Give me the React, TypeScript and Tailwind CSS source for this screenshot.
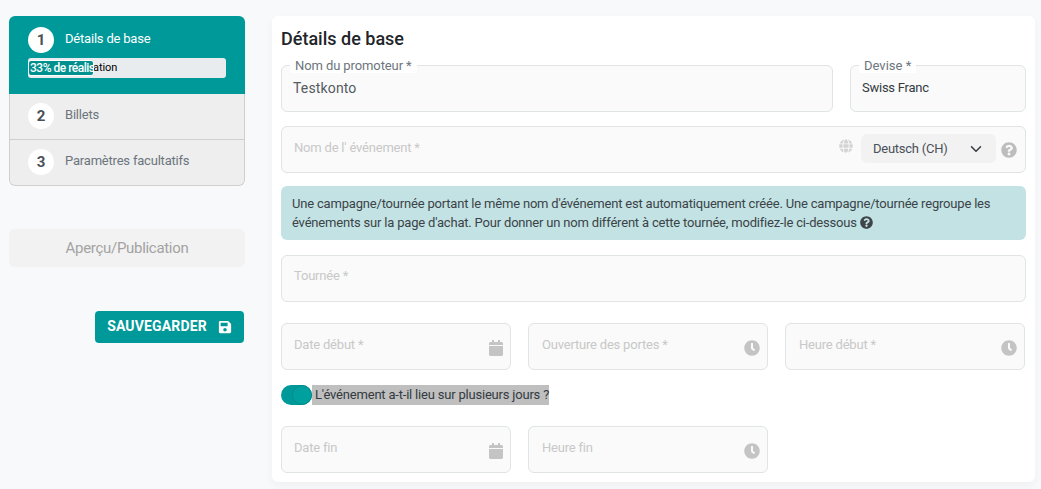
import type { ReactNode } from "react";
import { FaCalendar, FaClock, FaGlobe, FaQuestionCircle, FaSave } from "react-icons/fa";
import { ChevronDown } from "lucide-react";

const fieldBox = "relative bg-[#fafafa] border border-[#e0e4e4] rounded-md px-[12px]";

function Step({ n, label, active }: { n: number; label: string; active?: boolean }) {
  return (
    <div className="flex items-center h-[26px]">
      <div className="w-[26px] h-[26px] rounded-full bg-white flex items-center justify-center text-[15px] font-bold text-[#495057]">
        {n}
      </div>
      <span
        className={
          "ml-[11px] -mt-[3px] text-[13px] tracking-[-0.2px] " +
          (active ? "text-white" : "text-[#6c757d]")
        }
      >
        {label}
      </span>
    </div>
  );
}

function Placeholder({ children }: { children: ReactNode }) {
  return (
    <span className="block text-[13px] leading-[16px] tracking-[-0.2px] text-[#c8c8c8]">
      {children}
    </span>
  );
}

function DateField({
  label,
  width,
  icon,
}: {
  label: string;
  width: string;
  icon: "calendar" | "clock";
}) {
  return (
    <div className={fieldBox + " h-[47px] flex justify-between " + width}>
      <div className="pt-[13px]">
        <Placeholder>{label}</Placeholder>
      </div>
      <div className="pt-[16px] -mr-[5px]">
        {icon === "calendar" ? (
          <FaCalendar className="w-[14px] h-[16px] text-[#c4c4c4]" />
        ) : (
          <FaClock className="w-[16px] h-[16px] text-[#c4c4c4]" />
        )}
      </div>
    </div>
  );
}

export default function App() {
  return (
    <div className="w-[1041px] h-[489px] overflow-hidden bg-[#f8f9fa] flex font-['Roboto',sans-serif]">
      <div className="w-[236px] ml-[9px] mt-[16px] shrink-0">
        <div className="rounded-md bg-[#eeeeee] h-[170px] overflow-hidden">
          <div className="bg-[#009999] h-[78px] pt-[11px] pl-[19px]">
            <Step n={1} label="Détails de base" active />
            <div className="relative mt-[5px] w-[198px] h-[20px] rounded-[3px] bg-[#e9ecef] text-[11px] leading-[20px] tracking-[-0.1px] text-black">
              <span className="pl-[2px] whitespace-nowrap">33% de réalisation</span>
              <div className="absolute left-0 top-[2px] w-[66px] h-[16px] rounded-[3px] border border-white bg-[#00918f] overflow-hidden text-[12px] tracking-[-0.5px] text-white font-medium leading-[15px] whitespace-nowrap pl-px">
                33% de réalisation
              </div>
            </div>
          </div>
          <div className="h-[92px] border-x border-b border-[#cfcfcf] rounded-b-md">
            <div className="h-[46px] pt-[9px] pl-[18px] border-b border-[#cfcfcf]">
              <Step n={2} label="Billets" />
            </div>
            <div className="pt-[9px] pl-[18px]">
              <Step n={3} label="Paramètres facultatifs" />
            </div>
          </div>
        </div>
        <div className="mt-[43px] h-[38px] rounded-md bg-[#f2f2f2] flex items-center justify-center text-[15px] tracking-[-0.3px] text-[#a3a3a3]">
          Aperçu/Publication
        </div>
        <div className="mt-[44px] flex justify-end">
          <button className="w-[149px] h-[32px] mr-[1px] pb-px rounded-[4px] bg-[#009999] text-white text-[14px] tracking-[0.15px] font-bold flex items-center justify-center gap-[11px]">
            SAUVEGARDER
            <FaSave className="w-[14px] h-[14px]" />
          </button>
        </div>
      </div>

      <div className="ml-[27px] mt-[16px] w-[763px] h-[466px] bg-white rounded-md shadow-[0_4px_10px_rgba(0,0,0,0.04)] px-[9px] pt-[12px]">
        <h2 className="text-[18px] leading-[22px] font-medium text-[#212529]">Détails de base</h2>

        <div className="flex gap-[17px] mt-[15px]">
          <div className={fieldBox + " h-[47px] w-[552px] pt-[14px]"}>
            <span className="absolute left-[8px] -top-[8px] bg-white px-[5px] text-[13px] leading-[15px] tracking-[-0.1px] text-[#6c757d] rounded-t-sm">
              Nom du promoteur *
            </span>
            <span className="block -ml-px text-[14px] leading-[16px] tracking-[0.15px] text-[#555b61]">
              Testkonto
            </span>
          </div>
          <div className={fieldBox + " h-[47px] w-[176px] pt-[14px]"}>
            <span className="absolute left-[8px] -top-[8px] bg-white px-[5px] text-[13px] leading-[15px] text-[#6c757d]">
              Devise *
            </span>
            <span className="block -ml-px text-[13px] leading-[16px] tracking-[-0.25px] text-[#343a40]">
              Swiss Franc
            </span>
          </div>
        </div>

        <div className={fieldBox + " h-[47px] mt-[14px] flex items-start"}>
          <div className="flex-1 pt-[13px]">
            <Placeholder>Nom de l' événement *</Placeholder>
          </div>
          <FaGlobe className="mt-[12px] w-[14px] h-[14px] text-[#d4d4d4]" />
          <div className="ml-[8px] mt-[7px] w-[135px] h-[29px] rounded-md bg-[#f2f2f2] flex items-center justify-between pl-[12px] pr-[11px] text-[13px] tracking-[-0.25px] text-[#495057]">
            Deutsch (CH)
            <ChevronDown className="w-[18px] h-[18px] text-[#343a40]" strokeWidth={2} />
          </div>
          <FaQuestionCircle className="ml-[5px] -mr-[4px] mt-[15px] w-[16px] h-[16px] text-[#bdbdbd]" />
        </div>

        <div className="mt-[13px] h-[54px] rounded-md bg-[#c2e2e3] px-[11px] pt-[8px] text-[13px] leading-[19px] text-[#3c4348] tracking-[-0.19px]">
          Une campagne/tournée portant le même nom d'événement est automatiquement créée. Une campagne/tournée regroupe les
          <br />
          événements sur la page d'achat. Pour donner un nom différent à cette tournée, modifiez-le ci-dessous{" "}
          <FaQuestionCircle className="inline w-[13px] h-[13px] align-[-2px] text-[#3f4448]" />
        </div>

        <div className={fieldBox + " h-[47px] mt-[15px] pt-[12px]"}>
          <Placeholder>Tournée *</Placeholder>
        </div>

        <div className="flex gap-[17px] mt-[21px]">
          <DateField label="Date début *" width="w-[230px]" icon="calendar" />
          <DateField label="Ouverture des portes *" width="w-[240px] pl-[13px]" icon="clock" />
          <DateField label="Heure début *" width="w-[240px] pl-[13px]" icon="clock" />
        </div>

        <div className="flex items-center mt-[15px] h-[20px]">
          <div className="relative w-[31px] h-[20px] rounded-full bg-[#009999]">
            <div className="absolute right-0 top-0 w-[20px] h-[20px] rounded-full bg-[#00a09e] border border-[#008b8a]" />
          </div>
          <span className="h-[20px] bg-[#bfbfbf] pl-[3px] text-[13px] leading-[20px] tracking-[-0.2px] text-[#343a40]">
            L'événement a-t-il lieu sur plusieurs jours ?
          </span>
        </div>

        <div className="flex gap-[17px] mt-[21px]">
          <DateField label="Date fin" width="w-[230px]" icon="calendar" />
          <DateField label="Heure fin" width="w-[240px] pl-[13px]" icon="clock" />
        </div>
      </div>
    </div>
  );
}
